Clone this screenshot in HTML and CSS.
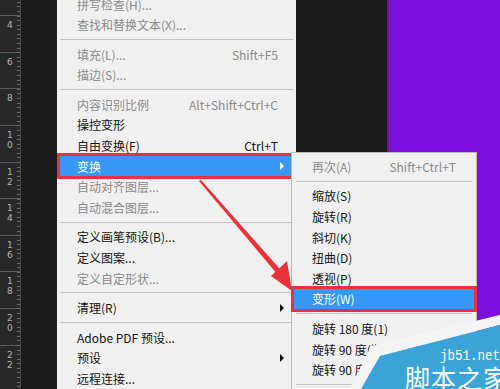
FILE: index.html
```html
<!DOCTYPE html>
<html>
<head>
  <title>Edit menu</title>
  <link rel="stylesheet" href="styles.css">
</head>
<body>
  <div class="workspace">
    <div class="ruler">
      <div class="ruler-seg"><span>2</span></div>
      <div class="ruler-seg"><span>4</span></div>
      <div class="ruler-seg"><span>6</span></div>
      <div class="ruler-seg"><span>8</span></div>
      <div class="ruler-seg"><span>1</span><span>0</span></div>
      <div class="ruler-seg"><span>1</span><span>2</span></div>
      <div class="ruler-seg"><span>1</span><span>4</span></div>
      <div class="ruler-seg"><span>1</span><span>6</span></div>
      <div class="ruler-seg"><span>1</span><span>8</span></div>
      <div class="ruler-seg"><span>2</span><span>0</span></div>
      <div class="ruler-seg"><span>2</span><span>2</span></div>
    </div>
    <div class="gutter"></div>

    <div class="menu main-menu">
      <div class="item disabled"><span>拼写检查(H)...</span></div>
      <div class="item disabled"><span>查找和替换文本(X)...</span></div>
      <div class="sep"></div>
      <div class="item disabled"><span>填充(L)...</span><span class="key">Shift+F5</span></div>
      <div class="item disabled"><span>描边(S)...</span></div>
      <div class="sep"></div>
      <div class="item disabled"><span>内容识别比例</span><span class="key">Alt+Shift+Ctrl+C</span></div>
      <div class="item"><span>操控变形</span></div>
      <div class="item"><span>自由变换(F)</span><span class="key">Ctrl+T</span></div>
      <div class="item active"><span>变换</span><span class="arrow"></span></div>
      <div class="item disabled"><span>自动对齐图层...</span></div>
      <div class="item disabled"><span>自动混合图层...</span></div>
      <div class="sep"></div>
      <div class="item"><span>定义画笔预设(B)...</span></div>
      <div class="item"><span>定义图案...</span></div>
      <div class="item disabled"><span>定义自定形状...</span></div>
      <div class="sep"></div>
      <div class="item"><span>清理(R)</span><span class="arrow"></span></div>
      <div class="sep"></div>
      <div class="item"><span>Adobe PDF 预设...</span></div>
      <div class="item"><span>预设</span><span class="arrow"></span></div>
      <div class="item"><span>远程连接...</span></div>
    </div>

    <div class="canvas-dark"></div>
    <div class="canvas-doc"></div>

    <div class="menu submenu">
      <div class="item disabled"><span>再次(A)</span><span class="key">Shift+Ctrl+T</span></div>
      <div class="sep"></div>
      <div class="item"><span>缩放(S)</span></div>
      <div class="item"><span>旋转(R)</span></div>
      <div class="item"><span>斜切(K)</span></div>
      <div class="item"><span>扭曲(D)</span></div>
      <div class="item"><span>透视(P)</span></div>
      <div class="item active"><span>变形(W)</span></div>
      <div class="sep"></div>
      <div class="item"><span>旋转 180 度(1)</span></div>
      <div class="item"><span>旋转 90 度(顺时针)(9)</span></div>
      <div class="item"><span>旋转 90 度(逆时针)(0)</span></div>
      <div class="sep"></div>
    </div>

    <svg class="callout" width="500" height="389" viewBox="0 0 500 389">
      <polygon points="199,181 201,180 287,277 283,281" fill="#e8323a"/>
      <polygon points="292,291 271,276 287,261" fill="#e8323a"/>
    </svg>

    <div class="watermark">
      <svg width="500" height="389" viewBox="0 0 500 389">
        <polygon points="350,389 371,346 500,315 500,325 380,356 361,389" fill="#f4f4f4"/>
        <polygon points="361,389 380,356 500,325 500,389" fill="#3aa4d8"/>
      </svg>
      <span class="wm-url">jb51.net</span>
      <span class="wm-name">脚本之家</span>
    </div>
  </div>
</body>
</html>
```

FILE: styles.css
```css
body {
  margin: 0;
  background-color: #1c1c1c;
  font-family: "Noto Sans CJK SC", "Liberation Sans", sans-serif;
}

.workspace {
  position: relative;
  display: flex;
  width: 500px;
  height: 389px;
  overflow: hidden;
  background-color: #1c1c1c;
}

/* Ruler */
.ruler {
  position: relative;
  flex: 0 0 20px;
  margin-top: -21.3px;
  background-color: #282828;
  border-right: 1px solid #4a4a4a;
}

.ruler:after {
  content: "";
  position: absolute;
  top: 0;
  right: 0;
  width: 3px;
  height: 100%;
  background: repeating-linear-gradient(to bottom, #6a6a6a 0, #6a6a6a 1px, transparent 1px, transparent 4.575px);
}

.ruler-seg {
  display: flex;
  flex-direction: column;
  height: 31.6px;
  padding: 4px 0 0 7px;
  border-top: 1px solid #5c5c5c;
  color: #b4b4b4;
  font-family: "DejaVu Sans", sans-serif;
  font-size: 9px;
  line-height: 10px;
}

.gutter {
  flex: 0 0 36px;
}

.canvas-dark {
  flex: 0 0 91px;
}

.canvas-doc {
  flex: 1;
  background-color: #7d10e0;
  border-left: 2px solid #6a14b8;
}

/* Menus */
.menu {
  background-color: #f0f0f0;
  font-size: 12px;
  color: #141414;
}

.main-menu {
  flex: 0 0 239px;
  margin-top: -6.3px;
  height: 400px;
}

.item {
  display: flex;
  align-items: center;
  justify-content: space-between;
  height: 20.6px;
  margin: 0 3px;
  padding: 0 15px 0 17px;
}

.item.disabled {
  color: #8a8a8a;
}

.item.active {
  background-color: #3797f7;
  color: #fff;
  box-shadow: 0 0 0 3px #e2363c;
}

.arrow {
  width: 0;
  height: 0;
  margin-right: -6px;
  border-top: 4px solid transparent;
  border-bottom: 4px solid transparent;
  border-left: 4px solid #111;
}

.item.active .arrow {
  border-left-color: #fff;
}

.sep {
  height: 1px;
  margin: 4px 2px 4px 3px;
  background-color: #c4c4c4;
}

.submenu {
  position: absolute;
  top: 152px;
  left: 291px;
  width: 184px;
  height: 260px;
  padding-top: 3px;
  border: 1px solid #b9b9b9;
}

.submenu .item {
  margin: 0 2px;
  padding: 0 18px;
}

.submenu .sep {
  margin: 4px;
}

/* Overlays */
.callout {
  position: absolute;
  top: 0;
  left: 0;
}

.watermark {
  position: absolute;
  top: 0;
  left: 0;
  width: 500px;
  height: 389px;
  color: #fff;
}

.watermark svg {
  position: absolute;
  top: 0;
  left: 0;
}

.wm-url {
  position: absolute;
  left: 440px;
  top: 348px;
  font-family: "Liberation Mono", monospace;
  font-size: 12.5px;
  line-height: 14px;
  transform: scaleY(1.2);
  transform-origin: left top;
}

.wm-name {
  position: absolute;
  left: 405px;
  top: 362px;
  font-size: 25px;
  line-height: 30px;
  letter-spacing: 1px;
  white-space: nowrap;
}
```
